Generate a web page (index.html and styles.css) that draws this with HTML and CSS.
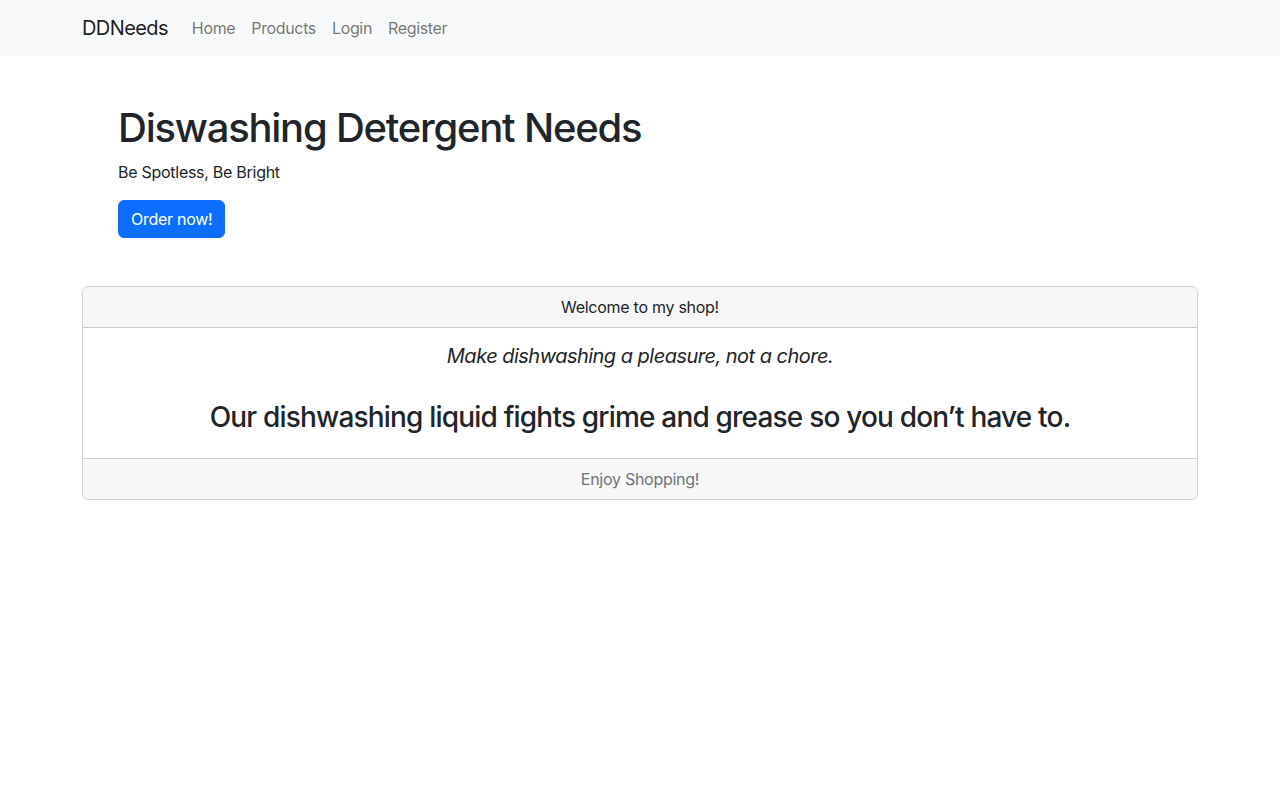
FILE: index.html
```html
<!DOCTYPE html>
<html lang="en">
<head>
<meta charset="utf-8">
<title>DDNeeds</title>
<link rel="stylesheet" href="styles.css">
</head>
<body>
<nav class="navbar">
  <div class="container nav-inner">
    <a class="brand" href="#">DDNeeds</a>
    <ul class="nav-links">
      <li><a href="#">Home</a></li>
      <li><a href="#">Products</a></li>
      <li><a href="#">Login</a></li>
      <li><a href="#">Register</a></li>
    </ul>
  </div>
</nav>
<main class="container">
  <section class="hero">
    <h1 class="hero-title">Diswashing Detergent Needs</h1>
    <p class="hero-sub">Be Spotless, Be Bright</p>
    <a class="btn-primary" href="#">Order now!</a>
  </section>
  <div class="card">
    <div class="card-header">Welcome to my shop!</div>
    <div class="card-body">
      <p class="tagline">Make dishwashing a pleasure, not a chore.</p>
      <h3 class="card-title">Our dishwashing liquid fights grime and grease so you don’t have to.</h3>
    </div>
    <div class="card-footer">Enjoy Shopping!</div>
  </div>
</main>
</body>
</html>
```
FILE: styles.css
```css
* { box-sizing: border-box; }
body {
  margin: 0;
  font-family: Inter, "Noto Sans", sans-serif;
  font-size: 16px;
  line-height: 1.5;
  letter-spacing: -0.017em;
  color: #212529;
  background: #fff;
}
a { text-decoration: none; }
.container {
  max-width: 1140px;
  margin: 0 auto;
  padding: 0 12px;
}
.navbar {
  background: #f8f9fa;
  padding: 8px 0;
}
.nav-inner {
  display: flex;
  align-items: center;
  height: 40px;
}
.brand {
  font-size: 20px;
  color: rgba(0,0,0,.9);
  margin-right: 16px;
  padding: 5px 0;
  line-height: 30px;
  letter-spacing: -0.03em;
}
.nav-links {
  display: flex;
  list-style: none;
  margin: 0;
  padding: 0;
}
.nav-links a {
  display: block;
  padding: 8px;
  color: rgba(0,0,0,.55);
  letter-spacing: -0.022em;
}
.hero {
  margin-top: 24px;
  padding: 24px 36px;
  display: flex;
  flex-direction: column;
  align-items: flex-start;
}
.hero-title {
  font-size: 40px;
  font-weight: 500;
  line-height: 1.2;
  letter-spacing: -0.031em;
  margin: 0 0 8px;
}
.hero-sub {
  margin: 0 0 16px;
}
.btn-primary {
  display: block;
  background: #0d6efd;
  color: #fff;
  padding: 6px 12px;
  border-radius: 6px;
  line-height: 24px;
  border: 1px solid #0d6efd;
}
.card {
  margin-top: 24px;
  border: 1px solid rgba(0,0,0,.175);
  border-radius: 6px;
  text-align: center;
  overflow: hidden;
}
.card-header, .card-footer {
  background: rgba(0,0,0,.03);
  padding: 8px 16px;
}
.card-header { border-bottom: 1px solid rgba(0,0,0,.175); }
.card-footer { border-top: 1px solid rgba(0,0,0,.175); color: #6c757d; }
.card-body { padding: 16px; }
.tagline {
  font-size: 20px;
  font-style: italic;
  line-height: 24px;
  letter-spacing: -0.026em;
  margin: 0 0 33px;
}
.card-title {
  font-size: 28px;
  font-weight: 500;
  line-height: 1.2;
  letter-spacing: -0.029em;
  margin: 0 0 7px;
}
```
